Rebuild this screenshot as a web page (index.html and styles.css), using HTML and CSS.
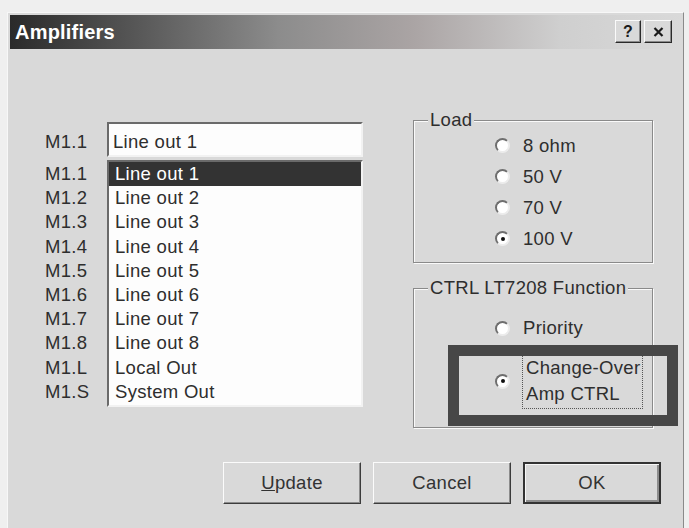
FILE: index.html
```html
<!DOCTYPE html>
<html>
<head>
<meta charset="utf-8">
<title>Amplifiers</title>
<link rel="stylesheet" href="styles.css">
</head>
<body>
<div class="window">
  <div class="titlebar">
    <span class="title">Amplifiers</span>
    <div class="tbtns">
      <span class="tbtn help">?</span>
      <span class="tbtn close"><svg width="11" height="10" viewBox="0 0 11 10"><path d="M1.5 1 L9.5 9 M9.5 1 L1.5 9" stroke="#1a1a1a" stroke-width="2.2" fill="none"/></svg></span>
    </div>
  </div>
  <div class="content">
    <div class="main">
      <div class="left">
        <div class="field-row">
          <span class="lbl">M1.1</span>
          <div class="field">Line out 1</div>
        </div>
        <div class="list-row">
          <div class="lbls">
            <span>M1.1</span><span>M1.2</span><span>M1.3</span><span>M1.4</span><span>M1.5</span>
            <span>M1.6</span><span>M1.7</span><span>M1.8</span><span>M1.L</span><span>M1.S</span>
          </div>
          <ul class="list">
            <li class="sel">Line out 1</li>
            <li>Line out 2</li>
            <li>Line out 3</li>
            <li>Line out 4</li>
            <li>Line out 5</li>
            <li>Line out 6</li>
            <li>Line out 7</li>
            <li>Line out 8</li>
            <li>Local Out</li>
            <li>System Out</li>
          </ul>
        </div>
      </div>
      <div class="right">
        <fieldset class="group load">
          <legend>Load</legend>
          <div class="opts">
            <div class="opt"><span class="radio"></span><span>8 ohm</span></div>
            <div class="opt"><span class="radio"></span><span>50 V</span></div>
            <div class="opt"><span class="radio"></span><span>70 V</span></div>
            <div class="opt"><span class="radio on"></span><span>100 V</span></div>
          </div>
        </fieldset>
        <fieldset class="group ctrl">
          <legend>CTRL LT7208 Function</legend>
          <div class="opts">
            <div class="opt first"><span class="radio"></span><span>Priority</span></div>
            <div class="opt two"><span class="radio on"></span><span class="focus">Change-Over<br>Amp CTRL</span></div>
          </div>
        </fieldset>
      </div>
    </div>
    <div class="buttons">
      <span class="btn"><u>U</u>pdate</span>
      <span class="btn">Cancel</span>
      <span class="btn default">OK</span>
    </div>
  </div>
  <div class="mark"></div>
</div>
</body>
</html>
```

FILE: styles.css
```css
html, body {
  margin: 0;
  padding: 0;
  height: 528px;
  overflow: hidden;
  background: #efefef;
}

body {
  font-family: "Liberation Sans", Arial, sans-serif;
  font-size: 18.5px;
  letter-spacing: 0.3px;
  color: #2e2e2e;
}

.window {
  position: relative;
  box-sizing: border-box;
  margin: 12px 0 0 7px;
  width: 677px;
  height: 530px;
  padding: 2px;
  background: #d9d9d9;
  border: 1px solid;
  border-color: #f7f7f7 #8a8a8a #8a8a8a #f7f7f7;
}

.titlebar {
  height: 34px;
  display: flex;
  justify-content: space-between;
  align-items: flex-start;
  padding: 0 9px 0 5px;
  background: linear-gradient(90deg, #2a2a2a 0%, #555 18%, #8c8c8c 40%, #aaa4a4 60%, #cfcfcf 82%, #d9d9d9 100%);
}

.title {
  color: #fff;
  font-weight: bold;
  font-size: 20px;
  letter-spacing: 0.2px;
  line-height: 34px;
}

.tbtns {
  display: flex;
  gap: 3px;
  margin-top: 5px;
}

.tbtn {
  box-sizing: border-box;
  height: 23px;
  display: flex;
  align-items: center;
  justify-content: center;
  background: #d9d9d9;
  border: 1px solid;
  border-color: #fafafa #2a2a2a #2a2a2a #fafafa;
  box-shadow: inset -1px -1px #8a8a8a;
  color: #1a1a1a;
}

.help {
  width: 26px;
  font-weight: bold;
  font-size: 16px;
  letter-spacing: 0;
}

.close {
  width: 28px;
}

.main {
  display: flex;
  padding: 61px 0 0 35px;
}

.left {
  margin-top: 12px;
}

.field-row {
  display: flex;
  align-items: center;
}

.lbl {
  width: 62px;
  padding-top: 4px;
}

.field {
  box-sizing: border-box;
  width: 256px;
  height: 35px;
  padding: 4px 0 0 4px;
  line-height: 27px;
  background: #fdfdfd;
  border: 2px solid;
  border-color: #6a6a6a #f2f2f2 #f2f2f2 #6a6a6a;
}

.list-row {
  display: flex;
  margin-top: 3px;
}

.lbls {
  width: 62px;
  padding-top: 2px;
}

.lbls span {
  display: block;
  height: 24.2px;
  line-height: 24.2px;
}

.list {
  box-sizing: border-box;
  width: 256px;
  height: 247px;
  margin: 0;
  padding: 0;
  list-style: none;
  background: #fdfdfd;
  border: 2px solid;
  border-color: #6a6a6a #f2f2f2 #f2f2f2 #6a6a6a;
}

.list li {
  height: 24.2px;
  line-height: 24.2px;
  padding-left: 6px;
}

.list li.sel {
  background: #333;
  color: #fff;
}

.right {
  margin-left: 50px;
  width: 240px;
}

.group {
  box-sizing: border-box;
  width: 240px;
  margin: 0;
  padding: 0 0 8px 0;
  border: 1px solid #8a8a8a;
  box-shadow: inset 1px 1px #fafafa, 1px 1px #fafafa;
  min-inline-size: 0;
}

.group legend {
  margin-left: 14px;
  padding: 0 2px;
  line-height: 20px;
  white-space: nowrap;
  background: #d9d9d9;
}

.opts {
  padding-left: 81px;
}

.opt {
  display: flex;
  align-items: center;
  height: 31px;
}

.radio {
  position: relative;
  box-sizing: border-box;
  width: 15px;
  height: 15px;
  margin-right: 13px;
  flex: none;
  border-radius: 50%;
  background: #fff;
  border: 2px solid;
  border-color: #6e6e6e #ececec #ececec #6e6e6e;
}

.radio.on::after {
  content: "";
  position: absolute;
  left: 3.5px;
  top: 3.5px;
  width: 4px;
  height: 4px;
  border-radius: 50%;
  background: #111;
}

.ctrl {
  margin-top: 15px;
  padding-bottom: 18px;
}

.opt.first {
  margin-top: 15px;
  height: 30px;
}

.opt.two {
  height: auto;
  margin-top: 10px;
}

.focus {
  margin-left: -1px;
  padding: 1px 2px 1px 3px;
  line-height: 26px;
  border: 1px dotted #555;
}

.buttons {
  display: flex;
  justify-content: flex-end;
  gap: 12px;
  margin-top: 34px;
  padding-right: 20px;
}

.btn {
  box-sizing: border-box;
  width: 138px;
  height: 42px;
  display: flex;
  align-items: center;
  justify-content: center;
  background: #d9d9d9;
  border: 1px solid;
  border-color: #fbfbfb #3c3c3c #3c3c3c #fbfbfb;
  box-shadow: inset -1px -1px #8c8c8c;
  color: #333;
}

.btn.default {
  border: 2px solid #333;
  box-shadow: inset 1px 1px #f7f7f7, inset -2px -2px #8c8c8c;
}

.mark {
  position: absolute;
  left: 440px;
  top: 332px;
  width: 230px;
  height: 81px;
  box-sizing: border-box;
  border: 11px solid #474747;
}
```
